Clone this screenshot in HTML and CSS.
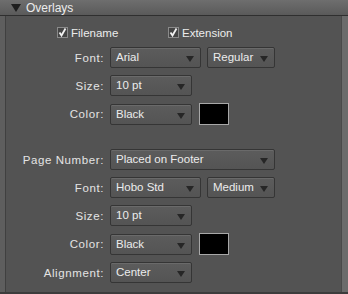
FILE: index.html
```html
<!DOCTYPE html>
<html>
  <head>
    <meta charset="UTF-8" />
    <title>Overlays</title>
    <link rel="stylesheet" href="styles.css">
  </head>
  <body>
    <div class="panel">
      <div class="header">
        <span class="twisty"></span>
        <span class="title">Overlays</span>
      </div>
      <div class="main">
        <div class="content">
          <div class="checks">
            <label class="check"><span class="box"><svg width="11" height="11" viewBox="0 0 11 11"><path d="M2.5 5.5 L4.5 8.5 L8.5 1.5" fill="none" stroke="#f2f2f2" stroke-width="1.8"/></svg></span>Filename</label>
            <label class="check"><span class="box"><svg width="11" height="11" viewBox="0 0 11 11"><path d="M2.5 5.5 L4.5 8.5 L8.5 1.5" fill="none" stroke="#f2f2f2" stroke-width="1.8"/></svg></span>Extension</label>
          </div>

          <div class="grid">
            <span class="lbl">Font:</span>
            <div class="ctrl">
              <div class="select w-font">Arial<span class="arrow"></span></div>
              <div class="select w-style">Regular<span class="arrow"></span></div>
            </div>

            <span class="lbl">Size:</span>
            <div class="ctrl"><div class="select w-small">10 pt<span class="arrow"></span></div></div>

            <span class="lbl">Color:</span>
            <div class="ctrl">
              <div class="select w-small">Black<span class="arrow"></span></div>
              <div class="swatch"></div>
            </div>
          </div>

          <div class="grid second">
            <span class="lbl">Page Number:</span>
            <div class="ctrl"><div class="select w-wide">Placed on Footer<span class="arrow"></span></div></div>

            <span class="lbl">Font:</span>
            <div class="ctrl">
              <div class="select w-font">Hobo Std<span class="arrow"></span></div>
              <div class="select w-style">Medium<span class="arrow"></span></div>
            </div>

            <span class="lbl">Size:</span>
            <div class="ctrl"><div class="select w-small">10 pt<span class="arrow"></span></div></div>

            <span class="lbl">Color:</span>
            <div class="ctrl">
              <div class="select w-small">Black<span class="arrow"></span></div>
              <div class="swatch"></div>
            </div>

            <span class="lbl">Alignment:</span>
            <div class="ctrl"><div class="select w-small">Center<span class="arrow"></span></div></div>
          </div>
        </div>
        <div class="scroll"></div>
      </div>
    </div>
  </body>
</html>
```

FILE: styles.css
```css
* {
  box-sizing: border-box;
}
body {
  margin: 0;
  font-family: "Liberation Sans", Arial, sans-serif;
  background-color: #535353;
}
.panel {
  width: 348px;
  height: 294px;
  display: flex;
  flex-direction: column;
  background: #535353;
  border-bottom: 2px solid #3c3c3c;
}
.header {
  height: 16px;
  display: flex;
  align-items: center;
  padding-left: 11px;
  background: linear-gradient(#6e6e6e, #5a5a5a);
  border-bottom: 1px solid #2f2f2f;
}
.twisty {
  width: 0;
  height: 0;
  border-left: 5px solid transparent;
  border-right: 5px solid transparent;
  border-top: 8px solid #1e1e1e;
  margin-right: 5px;
}
.title {
  font-size: 12px;
  color: #ececec;
}
.main {
  flex: 1;
  display: flex;
  border-left: 5px solid #5e5e5e;
}
.content {
  flex: 1;
  border-left: 1px solid #404040;
  padding-top: 10px;
}
.scroll {
  width: 7px;
  background: #6b6b6b;
  border-left: 1px solid #4a4a4a;
}
.checks {
  display: flex;
  padding-left: 51px;
  height: 13px;
  align-items: center;
}
.check {
  display: flex;
  align-items: center;
  font-size: 11.5px;
  color: #ececec;
  width: 111px;
}
.box {
  width: 11px;
  height: 11px;
  border: 1px solid #8a8a8a;
  background: #444;
  margin-right: 3px;
  display: flex;
}
.box svg {
  margin: -1px;
}
.grid {
  display: grid;
  grid-template-columns: 98px auto;
  column-gap: 6px;
  row-gap: 7px;
  margin-top: 8px;
  align-items: center;
}
.grid.second {
  margin-top: 24px;
}
.lbl {
  text-align: right;
  font-size: 11.5px;
  color: #e4e4e4;
  letter-spacing: 0.6px;
}
.ctrl {
  display: flex;
  align-items: center;
  gap: 6px;
}
.select {
  position: relative;
  height: 21px;
  line-height: 19px;
  padding-left: 5px;
  font-size: 11.5px;
  color: #ececec;
  background: linear-gradient(#5c5c5c, #545454);
  border: 1px solid #353535;
  border-radius: 2px;
  box-shadow: inset 0 1px 0 #6a6a6a;
}
.arrow {
  position: absolute;
  right: 6px;
  top: 8px;
  width: 0;
  height: 0;
  border-left: 4px solid transparent;
  border-right: 4px solid transparent;
  border-top: 6px solid #262626;
}
.w-font {
  width: 91px;
}
.w-style {
  width: 68px;
}
.w-small {
  width: 82px;
}
.w-wide {
  width: 165px;
}
.swatch {
  width: 30px;
  height: 22px;
  background: #000;
  border: 1px solid #a8a8a8;
  margin-left: 1px;
}
```
